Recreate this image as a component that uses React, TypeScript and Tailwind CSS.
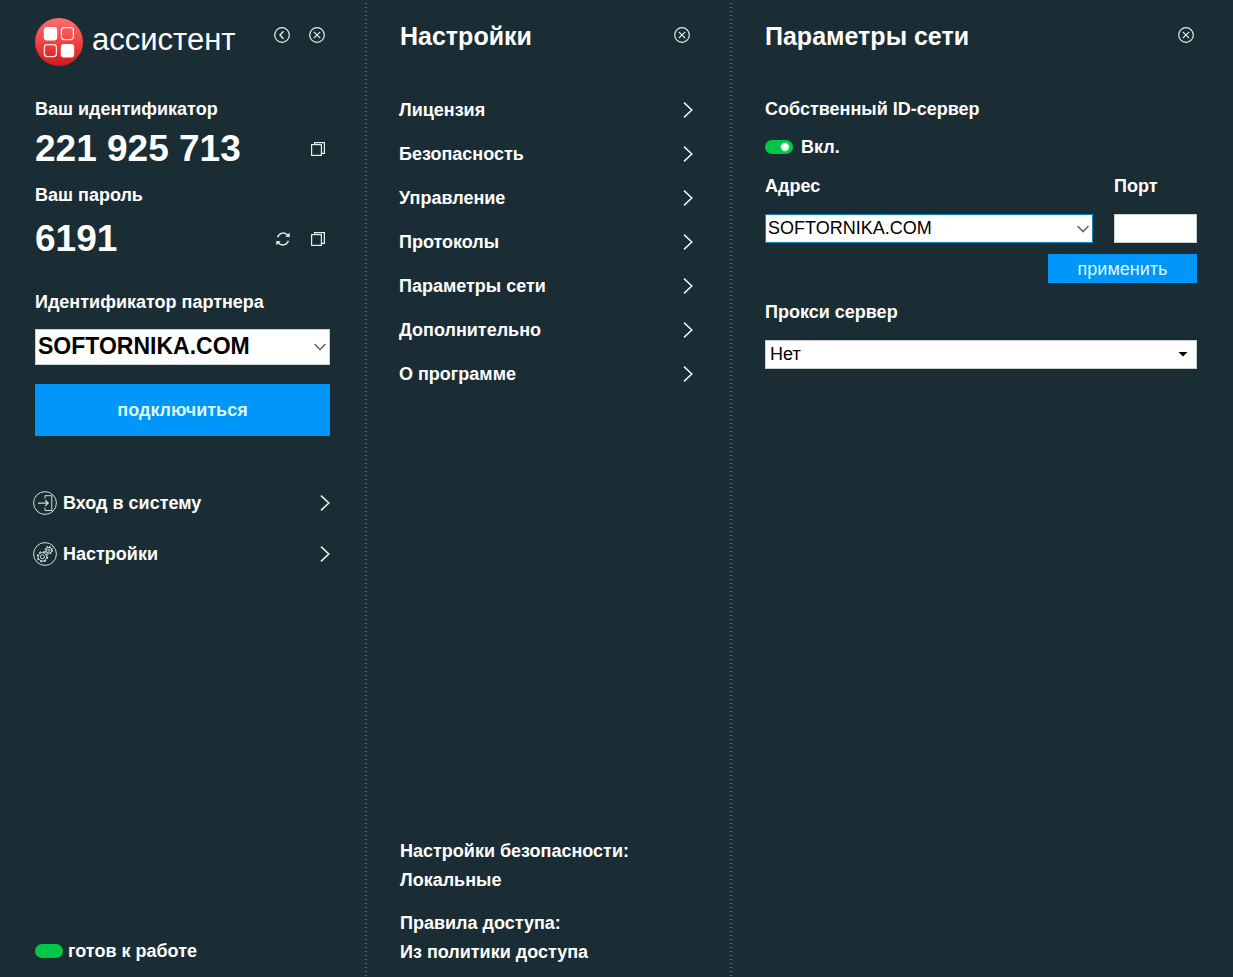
import React from 'react';

const settingsItems = [
  'Лицензия',
  'Безопасность',
  'Управление',
  'Протоколы',
  'Параметры сети',
  'Дополнительно',
  'О программе',
];

const LogoIcon = () => (
  <svg className="w-12 h-12 shrink-0" viewBox="0 0 48 48" fill="none" aria-hidden="true">
    <defs>
      <linearGradient id="logo" x1="0" y1="0" x2="0" y2="1">
        <stop offset="0" stopColor="#fb6f6f" />
        <stop offset="0.5" stopColor="#f04444" />
        <stop offset="1" stopColor="#d3161c" />
      </linearGradient>
    </defs>
    <circle cx="24" cy="24" r="24" fill="url(#logo)" />
    <rect x="8.8" y="9" width="13.4" height="13.4" rx="3" fill="#fff" />
    <rect x="26.4" y="9.6" width="12" height="12" rx="2.8" stroke="#ffe4e1" strokeWidth="1.3" />
    <rect x="9.4" y="26.6" width="12" height="12" rx="2.8" stroke="#ffe4e1" strokeWidth="1.3" />
    <rect x="25.8" y="26" width="13.4" height="13.4" rx="3" fill="#fff" />
  </svg>
);

const CloseIcon = () => (
  <svg className="w-4 h-4" viewBox="0 0 16 16" fill="none" stroke="#e6eef0" strokeWidth="1.2" aria-hidden="true">
    <circle cx="8" cy="8" r="7.3" />
    <path d="M4.8 4.8l6.4 6.4M11.2 4.8l-6.4 6.4" />
  </svg>
);

const BackIcon = () => (
  <svg className="w-4 h-4" viewBox="0 0 16 16" fill="none" stroke="#e6eef0" strokeWidth="1.2" aria-hidden="true">
    <circle cx="8" cy="8" r="7.3" />
    <path d="M9.5 4.3L6 8l3.5 3.7" strokeWidth="1.4" />
  </svg>
);

const CopyIcon = () => (
  <svg className="w-4 h-4" viewBox="0 0 16 16" fill="none" stroke="#e6eef0" strokeWidth="1.2" aria-hidden="true">
    <rect x="1.6" y="3.6" width="9.8" height="10.8" />
    <path d="M4.6 3.6V1.6h9.8v10.8h-3" />
  </svg>
);

const RefreshIcon = () => (
  <svg className="w-4 h-4" viewBox="0 0 16 16" fill="none" stroke="#e6eef0" strokeWidth="1.4" aria-hidden="true">
    <path d="M2.6 6.2C4.2 1.6 9.8.6 13 4.4" />
    <path d="M13.4 9.8c-1.6 4.6-7.2 5.6-10.4 1.8" />
    <path d="M14.8 1.8l-.2 4.5-4.4-.8zM1.2 14.2l.2-4.5 4.4.8z" fill="#e6eef0" stroke="none" />
  </svg>
);

const LoginIcon = () => (
  <svg className="w-6 h-6" viewBox="0 0 24 24" fill="none" stroke="#d3dfe2" strokeWidth="1" aria-hidden="true">
    <circle cx="12" cy="12" r="11.4" />
    <path d="M12 7.5V4.7h6.8v14.8H12v-2.8" />
    <path d="M5 12.1h10M12.2 9.2l3 2.9-3 2.9" strokeWidth="1.2" />
  </svg>
);

const GearsIcon = () => (
  <svg className="w-6 h-6" viewBox="0 0 24 24" fill="none" stroke="#d3dfe2" aria-hidden="true">
    <circle cx="12" cy="12" r="11.4" />
    <circle cx="9.4" cy="14.8" r="4.2" strokeWidth="1" />
    <circle cx="9.4" cy="14.8" r="5.1" strokeWidth="1.3" strokeDasharray="2 2.005" />
    <circle cx="9.4" cy="14.8" r="2" strokeWidth="1" />
    <circle cx="15.9" cy="8.2" r="2.9" strokeWidth="1" />
    <circle cx="15.9" cy="8.2" r="3.7" strokeWidth="1.2" strokeDasharray="1.45 1.456" />
    <circle cx="15.9" cy="8.2" r="1.1" strokeWidth="0.9" />
  </svg>
);

const ChevronRight = () => (
  <svg className="w-[10px] h-4 shrink-0" viewBox="0 0 10 16" fill="none" stroke="#eef4f5" strokeWidth="1.5" aria-hidden="true">
    <path d="M1 .6L8.8 8 1 15.4" />
  </svg>
);

const ChevronDown = () => (
  <svg
    className="absolute right-1 top-1/2 -translate-y-1/2 w-3 h-2 pointer-events-none"
    viewBox="0 0 12 8"
    fill="none"
    stroke="#666"
    strokeWidth="1.6"
    aria-hidden="true"
  >
    <path d="M.6 1L6 6.6 11.4 1" />
  </svg>
);

const Divider = () => (
  <div className="w-[2px] shrink-0 bg-[repeating-linear-gradient(to_bottom,#1b2d34_0px,#1b2d34_3px,#2b7390_3px,#2b7390_4px)]" />
);

const App: React.FC = () => {
  return (
    <div className="min-h-screen flex bg-[#1b2d34] text-white text-[18px] leading-5 font-bold font-['Liberation_Sans',Arial,sans-serif]">
      <aside className="w-[365px] shrink-0 flex flex-col px-[35px] pt-[18px] pb-4">
        <header className="flex items-start">
          <LogoIcon />
          <span className="ml-[9px] mt-1 text-[31px] leading-9 font-normal">ассистент</span>
          <div className="ml-auto mr-[5px] mt-[9px] flex gap-[19px]">
            <button type="button" aria-label="Назад"><BackIcon /></button>
            <button type="button" aria-label="Закрыть"><CloseIcon /></button>
          </div>
        </header>

        <h2 className="mt-[33px]">Ваш идентификатор</h2>
        <div className="mt-[10px] h-10 flex items-center justify-between pr-1">
          <span className="text-[37px] leading-10">221 925 713</span>
          <button type="button" aria-label="Копировать идентификатор"><CopyIcon /></button>
        </div>
        <h2 className="mt-4">Ваш пароль</h2>
        <div className="mt-[14px] h-10 flex items-center pr-1">
          <span className="text-[37px] leading-10">6191</span>
          <button type="button" className="ml-auto" aria-label="Обновить пароль"><RefreshIcon /></button>
          <button type="button" className="ml-[19px]" aria-label="Копировать пароль"><CopyIcon /></button>
        </div>

        <label htmlFor="partner" className="mt-[33px]">Идентификатор партнера</label>
        <div className="relative mt-[17px]">
          <select id="partner" className="block w-full h-9 appearance-none border border-[#c9cfd1] bg-white pl-[2px] pr-6 pb-[3px] text-[23px] text-black font-bold">
            <option>SOFTORNIKA.COM</option>
          </select>
          <ChevronDown />
        </div>
        <button type="button" className="mt-[19px] h-[52px] bg-[#0096fa] text-[#dcfbff]">подключиться</button>

        <nav className="mt-[55px] -ml-[2px] flex flex-col gap-[27px]">
          <a href="#login" className="flex items-center">
            <LoginIcon />
            <span className="ml-[6px] mr-auto">Вход в систему</span>
            <ChevronRight />
          </a>
          <a href="#settings" className="flex items-center">
            <GearsIcon />
            <span className="ml-[6px] mr-auto">Настройки</span>
            <ChevronRight />
          </a>
        </nav>

        <div className="mt-auto flex items-center gap-[5px]">
          <span className="w-7 h-[14px] rounded-full bg-[#00c846]" />
          готов к работе
        </div>
      </aside>

      <Divider />

      <section className="w-[363px] shrink-0 flex flex-col pl-8 pr-[37px] pt-[21px] pb-[10px]">
        <header className="flex items-start justify-between">
          <h1 className="pl-px text-[25px] leading-[30px]">Настройки</h1>
          <button type="button" className="mt-[6px] mr-[3px]" aria-label="Закрыть"><CloseIcon /></button>
        </header>
        <nav className="mt-[37px]">
          {settingsItems.map((item) => (
            <a key={item} href="#settings" className="h-11 flex items-center justify-between">
              {item}
              <ChevronRight />
            </a>
          ))}
        </nav>
        <div className="mt-auto pl-px leading-[29px]">
          <p>Настройки безопасности:</p>
          <p>Локальные</p>
          <p className="mt-[14px]">Правила доступа:</p>
          <p>Из политики доступа</p>
        </div>
      </section>

      <Divider />

      <main className="flex-1 min-w-0 pl-[33px] pr-9 pt-[21px]">
        <header className="flex items-start justify-between">
          <h1 className="text-[25px] leading-[30px]">Параметры сети</h1>
          <button type="button" className="mt-[6px] mr-[3px]" aria-label="Закрыть"><CloseIcon /></button>
        </header>

        <h2 className="mt-12">Собственный ID-сервер</h2>
        <label className="mt-[18px] flex items-center gap-2">
          <input
            type="checkbox"
            role="switch"
            defaultChecked
            className="appearance-none w-7 h-[14px] rounded-full bg-[#5c6b70] checked:bg-[#00c846] bg-[radial-gradient(circle_at_20px_7px,#fff_3px,transparent_5px)]"
          />
          Вкл.
        </label>

        <div className="mt-[19px] grid grid-cols-[1fr_83px] gap-x-[21px] gap-y-[18px]">
          <label htmlFor="address">Адрес</label>
          <label htmlFor="port">Порт</label>
          <div className="relative">
            <select id="address" className="block w-full h-[29px] appearance-none border border-[#0c86b8] bg-white pl-[2px] pr-6 pb-[2px] text-black font-normal">
              <option>SOFTORNIKA.COM</option>
            </select>
            <ChevronDown />
          </div>
          <input id="port" type="text" className="w-full h-[29px] border border-[#c9cfd1] bg-white px-1 text-black font-normal" />
        </div>
        <button type="button" className="mt-[11px] ml-auto block w-[149px] h-[29px] bg-[#0096fa] text-[#dcfbff] font-normal">
          применить
        </button>

        <label htmlFor="proxy" className="mt-[19px] block">Прокси сервер</label>
        <div className="relative mt-[18px]">
          <select id="proxy" className="block w-full h-[29px] appearance-none border border-[#c9cfd1] bg-white pl-1 pr-6 pb-[2px] text-black font-normal">
            <option>Нет</option>
          </select>
          <svg className="absolute right-[9px] top-3 w-[10px] h-[5px] pointer-events-none" viewBox="0 0 10 5" fill="#000" aria-hidden="true">
            <path d="M.5 0h9L5 4.6z" />
          </svg>
        </div>
      </main>
    </div>
  );
};

export default App;
